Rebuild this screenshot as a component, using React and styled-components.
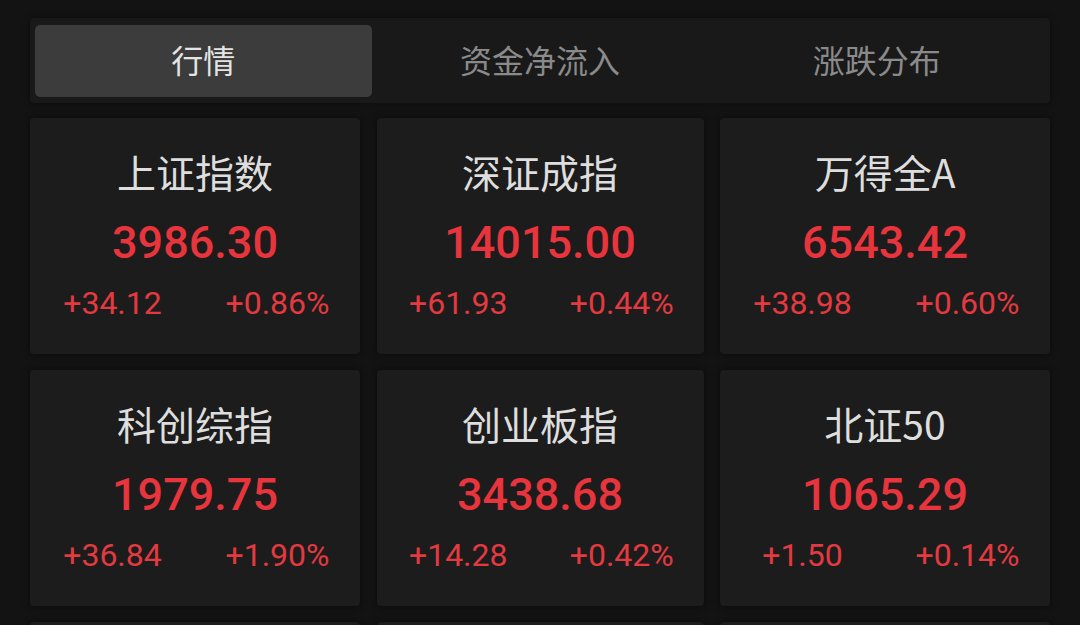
import React, { useState } from 'react';
import styled, { createGlobalStyle } from 'styled-components';

const GlobalStyle = createGlobalStyle`
    body {
        margin: 0;
        background: #131313;
        font-family: "Noto Sans CJK SC", "Noto Sans", sans-serif;
    }
`

const Page = styled.div`
    padding: 18px 30px 0 30px;
`

const TabBar = styled.div`
    display: grid;
    grid-template-columns: repeat(3, 1fr);
    padding: 7px 5px 6px 5px;
    background: #191919;
    border-radius: 4px;
    margin-bottom: 15px;
    box-shadow: 0 0 6px rgba(0, 0, 0, 0.45);
`

const Tab = styled.div`
    height: 72px;
    box-sizing: border-box;
    padding-bottom: 4px;
    display: flex;
    align-items: center;
    justify-content: center;
    border-radius: 5px;
    font-size: 32px;
    color: ${p => (p.$active ? '#e4e4e4' : '#8a8a8a')};
    background: ${p => (p.$active ? '#3c3c3c' : 'transparent')};
    cursor: pointer;
`

const Grid = styled.div`
    display: grid;
    grid-template-columns: 330px 327px 330px;
    justify-content: space-between;
    row-gap: 16px;
`

const Card = styled.div`
    height: 236px;
    box-sizing: border-box;
    padding-top: 28px;
    background: #1c1c1c;
    border-radius: 4px;
    display: flex;
    flex-direction: column;
    align-items: center;
    box-shadow: 0 0 6px rgba(0, 0, 0, 0.5);
`

const Name = styled.div`
    height: 50px;
    line-height: 50px;
    font-size: 39px;
    color: #dedede;
    font-family: "Noto Sans CJK SC", "Noto Sans", sans-serif;
`

const Value = styled.div`
    margin-top: 19px;
    height: 56px;
    line-height: 56px;
    font-size: 45px;
    font-weight: 500;
    color: #e8343c;
    font-family: Roboto, "Noto Sans", sans-serif;
`

const Changes = styled.div`
    margin-top: 12px;
    width: 100%;
    height: 40px;
    display: flex;
`

const Change = styled.div`
    flex: 1;
    text-align: center;
    line-height: 40px;
    font-size: 32px;
    color: #e23a40;
    font-family: Roboto, "Noto Sans", sans-serif;
`

const tabs = ['行情', '资金净流入', '涨跌分布']

const indices = [
    { name: '上证指数', value: '3986.30', diff: '+34.12', pct: '+0.86%' },
    { name: '深证成指', value: '14015.00', diff: '+61.93', pct: '+0.44%' },
    { name: '万得全A', value: '6543.42', diff: '+38.98', pct: '+0.60%' },
    { name: '科创综指', value: '1979.75', diff: '+36.84', pct: '+1.90%' },
    { name: '创业板指', value: '3438.68', diff: '+14.28', pct: '+0.42%' },
    { name: '北证50', value: '1065.29', diff: '+1.50', pct: '+0.14%' },
]

const App = () => {
    const [active, setActive] = useState(0)
    return (
        <Page>
            <GlobalStyle />
            <TabBar>
                {tabs.map((t, i) => (
                    <Tab key={t} $active={i === active} onClick={() => setActive(i)}>{t}</Tab>
                ))}
            </TabBar>
            <Grid>
                {indices.map(item => (
                    <Card key={item.name}>
                        <Name>{item.name}</Name>
                        <Value>{item.value}</Value>
                        <Changes>
                            <Change>{item.diff}</Change>
                            <Change>{item.pct}</Change>
                        </Changes>
                    </Card>
                ))}
                {/* next row, only its top edge shows */}
                <Card />
                <Card />
                <Card />
            </Grid>
        </Page>
    );
};

export default App;
